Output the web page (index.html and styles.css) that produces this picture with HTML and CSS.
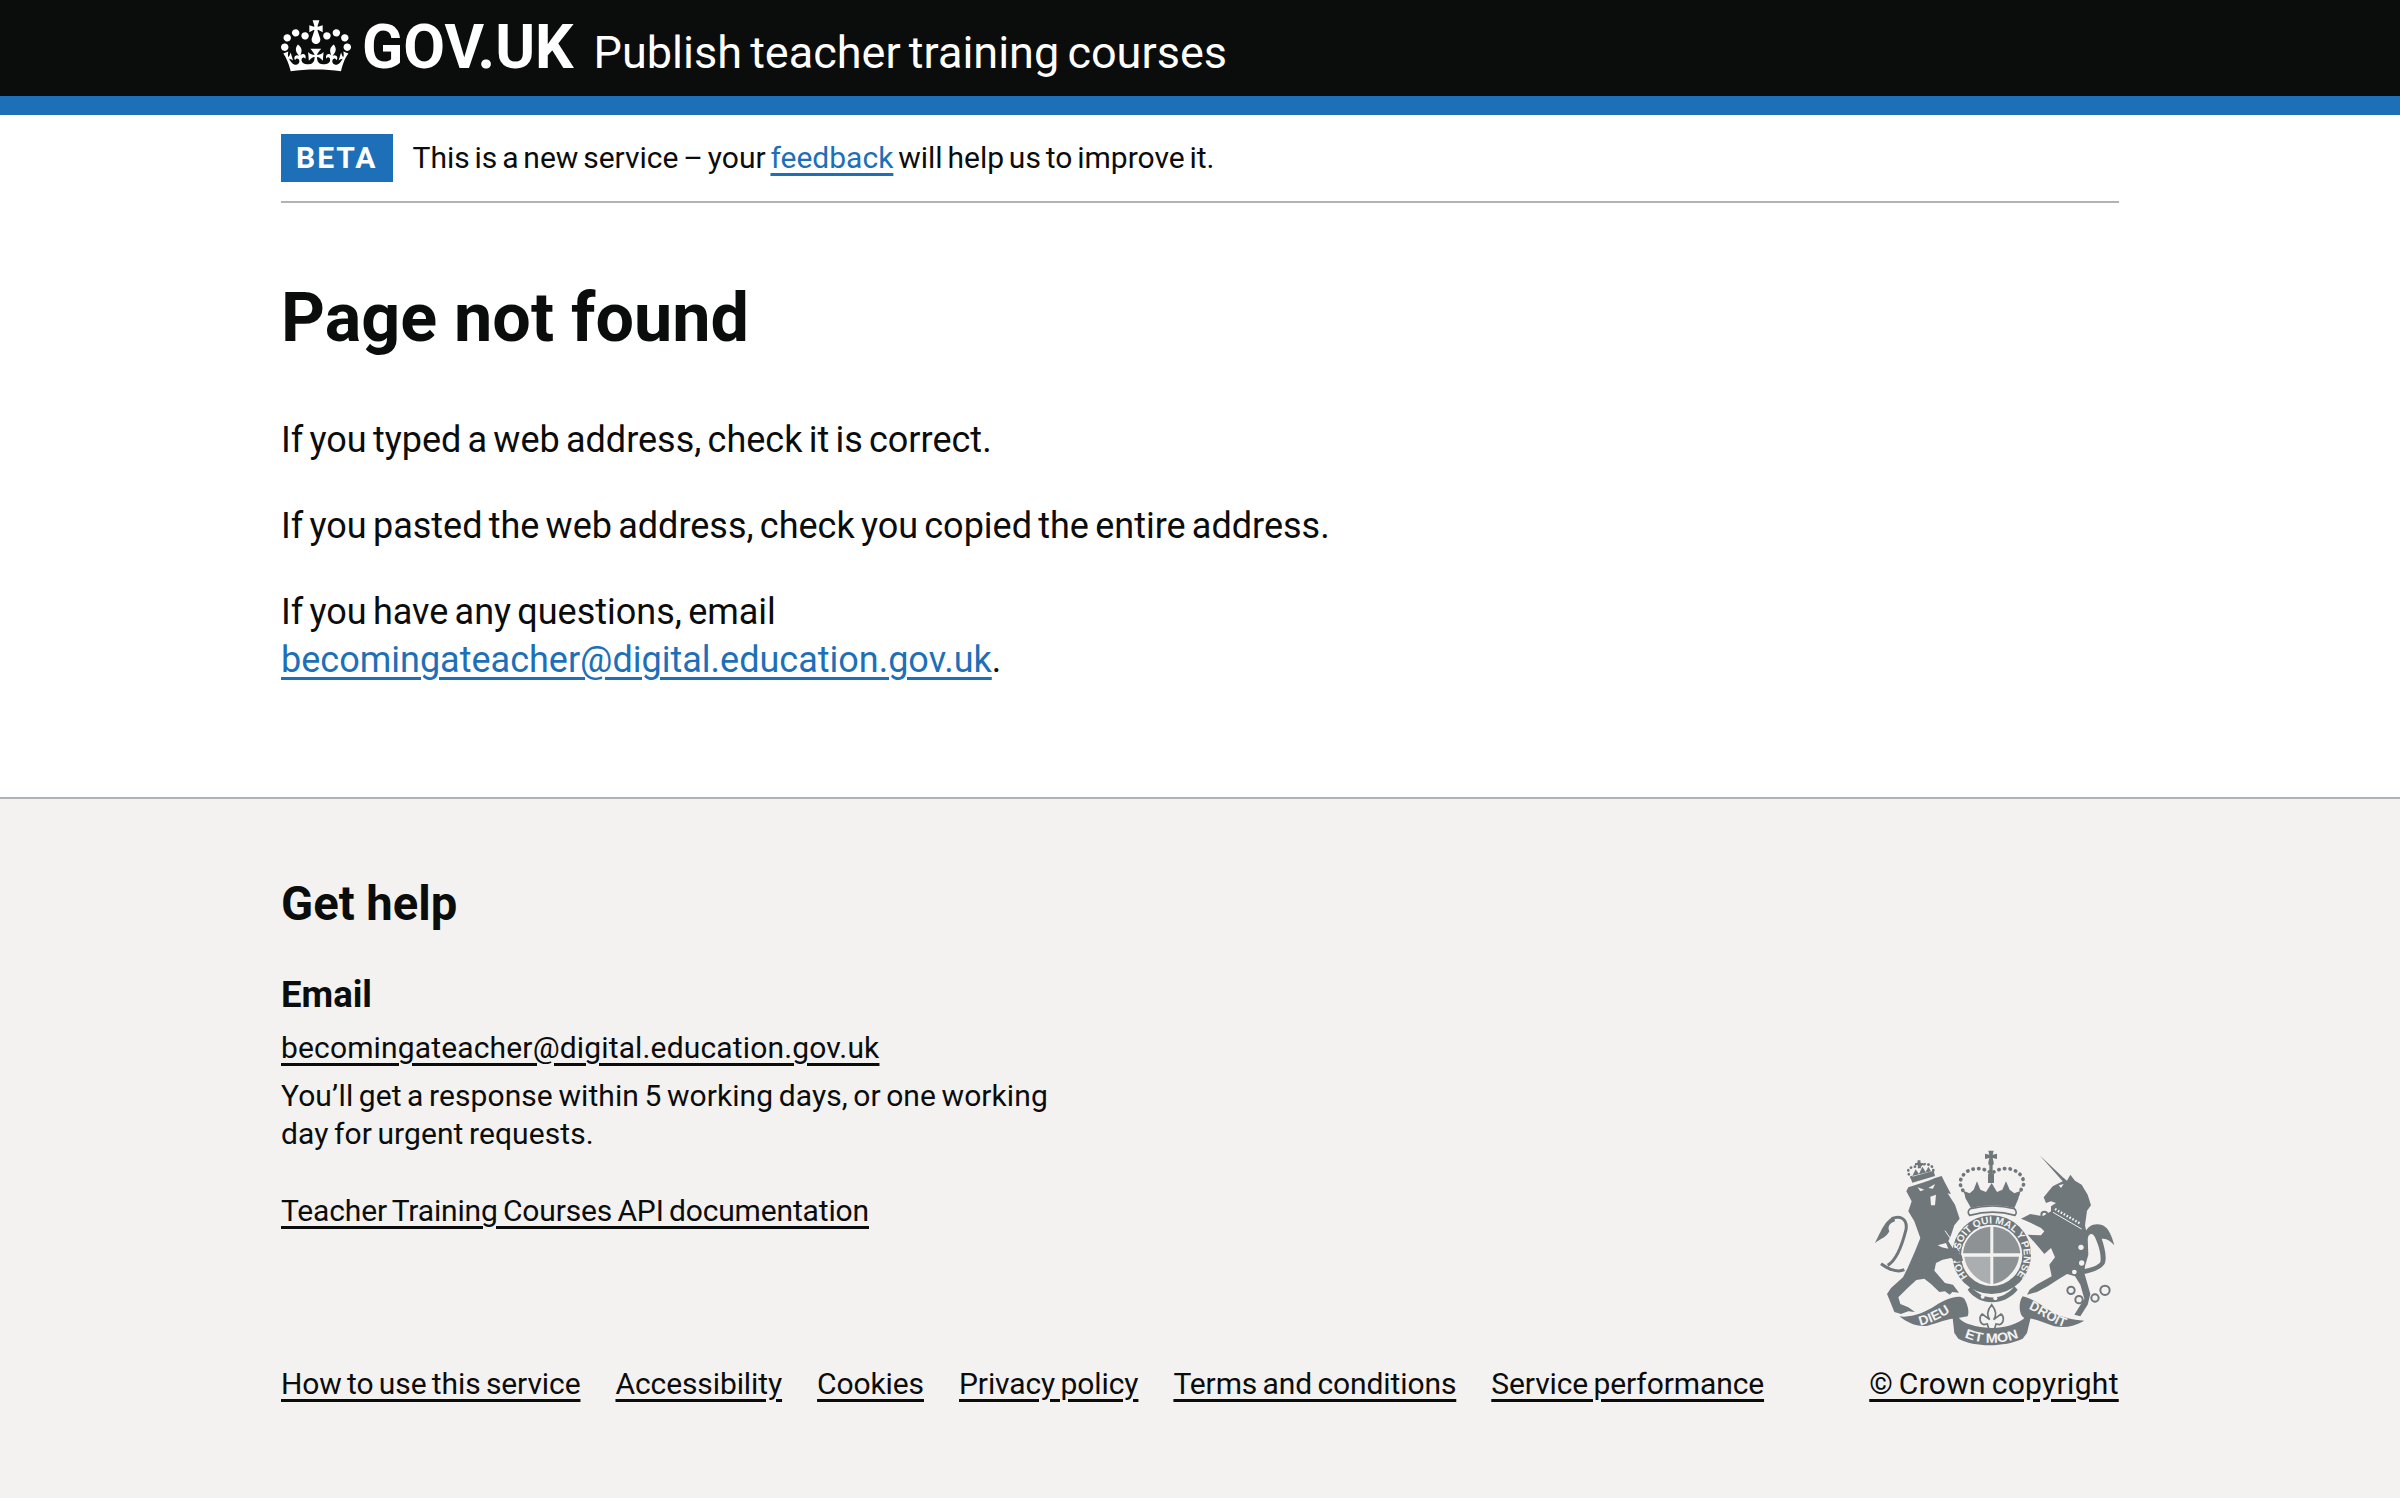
FILE: index.html
```html
<!DOCTYPE html>
<html lang="en">
<head>
    <meta charset="UTF-8">
    <title>Page not found - Publish teacher training courses</title>
    <link rel="stylesheet" href="styles.css">
</head>
<body>
    <header class="header">
        <div class="width-container header-row">
            <a class="logo" href="#">
                <svg class="crown" viewBox="0 0 132 97" fill="#fff"><path d="M25 30.2c3.5 1.5 7.7-.2 9.1-3.7 1.5-3.6-.2-7.8-3.9-9.2-3.6-1.4-7.6.3-9.1 3.9-1.4 3.5.3 7.5 3.9 9zM9 39.5c3.6 1.5 7.8-.2 9.2-3.7 1.5-3.6-.2-7.8-3.9-9.1-3.6-1.5-7.6.2-9.1 3.8-1.4 3.5.3 7.6 3.8 9zM4.4 57.2c3.5 1.5 7.7-.2 9.1-3.8 1.5-3.6-.2-7.7-3.9-9.1-3.6-1.5-7.6.3-9.1 3.8-1.4 3.5.3 7.6 3.9 9.1zm38.3-21.4c3.5 1.5 7.7-.2 9.1-3.8 1.5-3.6-.2-7.7-3.9-9.1-3.6-1.5-7.6.3-9.1 3.8-1.3 3.6.4 7.7 3.9 9.1zm64.4-5.6c-3.6 1.5-7.8-.2-9.1-3.7-1.5-3.6.2-7.8 3.8-9.2 3.6-1.4 7.7.3 9.2 3.9 1.3 3.5-.4 7.5-3.9 9zm15.9 9.3c-3.6 1.5-7.7-.2-9.1-3.7-1.5-3.6.2-7.8 3.7-9.1 3.6-1.5 7.7.2 9.2 3.8 1.5 3.5-.3 7.6-3.8 9zm4.7 17.7c-3.6 1.5-7.8-.2-9.2-3.8-1.5-3.6.2-7.7 3.9-9.1 3.6-1.5 7.7.3 9.2 3.8 1.3 3.5-.4 7.6-3.9 9.1zM89.3 35.8c-3.6 1.5-7.8-.2-9.2-3.8-1.4-3.6.2-7.7 3.9-9.1 3.6-1.5 7.7.3 9.2 3.8 1.4 3.6-.3 7.7-3.9 9.1zM69.7 17.7l8.9 4.7V9.3l-8.9 2.8c-.2-.3-.5-.6-.9-.9L72.4 0H59.6l3.5 11.2c-.3.3-.6.5-.9.9l-8.8-2.8v13.1l8.8-4.7c.3.3.6.7.9.9l-5 15.4v.1c-.2.8-.4 1.6-.4 2.4 0 4.1 3.1 7.5 7 8.1h.2c.3 0 .7.1 1 .1.4 0 .7 0 1-.1h.2c4-.6 7.1-4.1 7.1-8.1 0-.8-.1-1.7-.4-2.4V34l-5.1-15.4c.4-.2.7-.6 1-.9zM66 92.8c16.9 0 32.8 1.1 47.1 3.2 4-16.9 8.9-26.7 14-33.5l-9.6-3.4c1 4.9 1.1 7.2 0 10.2-1.5-1.4-3-4.3-4.2-8.7L108.6 76c2.8-2 5-3.2 7.5-3.3-4.4 9.4-10 11.9-13.6 11.2-4.3-.8-6.3-4.6-5.6-7.9 1-4.7 5.7-5.9 8-.5 4.3-8.7-3-11.4-7.6-8.8 7.1-7.2 7.9-13.5 2.1-21.1-8 6.1-8.1 12.3-4.5 20.8-4.7-5.4-12.1-2.5-9.5 6.2 3.4-5.2 7.9-2 7.2 3.1-.6 4.3-6.4 7.8-13.5 7.2-10.3-.9-10.9-8-11.2-13.8 2.5-.5 7.1 1.8 11 7.3L80.2 60c-4.1 4.4-8 5.3-12.3 5.4 1.4-4.4 8-11.6 8-11.6H55.5s6.4 7.2 7.9 11.6c-4.2-.1-8-1-12.3-5.4l1.4 16.4c3.9-5.5 8.5-7.7 10.9-7.3-.3 5.8-.9 12.8-11.1 13.8-7.2.6-12.9-2.9-13.5-7.2-.7-5 3.8-8.3 7.1-3.1 2.7-8.7-4.6-11.6-9.4-6.2 3.7-8.5 3.6-14.7-4.6-20.8-5.8 7.6-5 13.9 2.2 21.1-4.7-2.6-11.9.1-7.7 8.8 2.3-5.5 7.1-4.2 8.1.5.7 3.3-1.3 7.1-5.7 7.9-3.5.7-9-1.8-13.5-11.2 2.5.1 4.7 1.3 7.5 3.3l-4.7-15.4c-1.2 4.4-2.7 7.2-4.3 8.7-1.1-3-.9-5.3 0-10.2l-9.5 3.4c5 6.9 9.9 16.7 14 33.5 14.8-2.1 30.8-3.2 47.7-3.2z"/></svg>
                <span class="logo-text">GOV.UK</span>
            </a>
            <a class="service-name" href="#">Publish teacher training courses</a>
        </div>
    </header>
    <div class="header-stripe"></div>

    <div class="width-container">
        <div class="phase-banner">
            <strong class="phase-tag">BETA</strong>
            <span>This is a new service – your <a href="#" class="link">feedback</a> will help us to improve it.</span>
        </div>
        <main class="main">
            <h1>Page not found</h1>
            <p>If you typed a web address, check it is correct.</p>
            <p>If you pasted the web address, check you copied the entire address.</p>
            <p>If you have any questions, email<br><a href="#" class="link">becomingateacher@digital.education.gov.uk</a>.</p>
        </main>
    </div>

    <footer class="footer">
        <div class="width-container footer-grid">
            <div class="footer-main">
                <h2>Get help</h2>
                <h3>Email</h3>
                <p class="footer-text email"><a href="#">becomingateacher@digital.education.gov.uk</a></p>
                <p class="footer-text response">You’ll get a response within 5 working days, or one working day for urgent requests.</p>
                <p class="footer-text api"><a href="#">Teacher Training Courses API documentation</a></p>
                <ul class="footer-links">
                    <li><a href="#">How to use this service</a></li>
                    <li><a href="#">Accessibility</a></li>
                    <li><a href="#">Cookies</a></li>
                    <li><a href="#">Privacy policy</a></li>
                    <li><a href="#">Terms and conditions</a></li>
                    <li><a href="#">Service performance</a></li>
                </ul>
            </div>
            <div class="copyright">
                <svg class="crest" viewBox="0 0 741 600">
                    <defs>
                        <path id="ring-top" d="M290 386A96 96 0 1 1 434 386"/>
                        <path id="ribbon-l" d="M148 533C180 525 212 510 240 490"/>
                        <path id="ribbon-m" d="M280 568C335 590 390 590 445 568"/>
                        <path id="ribbon-r" d="M472 483C505 495 540 525 578 537"/>
                    </defs>
                    <!-- garter and shield -->
                    <circle fill="#6f777b" cx="362" cy="320" r="118"/>
                    <path fill="#6f777b" d="M300 415C335 460 395 460 430 415L440 425C400 475 325 475 290 425Z"/>
                    <circle fill="#f3f2f1" cx="362" cy="322" r="92"/>
                    <g fill="#6f777b">
                        <path d="M358 316H276A86 86 0 0 1 358 236Z" opacity=".78"/>
                        <path d="M367 316H448A86 86 0 0 0 367 236Z" opacity=".78"/>
                        <path d="M358 326H280C284 365 320 402 358 408Z" opacity=".55"/>
                        <path d="M367 326H444C440 365 404 402 367 408Z" opacity=".78"/>
                    </g>
                    <g class="crest-text">
                        <text font-size="30" textLength="436" lengthAdjust="spacingAndGlyphs"><textPath href="#ring-top">HONI SOIT QUI MAL Y PENSE</textPath></text>
                    </g>
                    <g fill="#f3f2f1">
                        <circle cx="335" cy="446" r="6"/><circle cx="373" cy="451" r="6"/>
                    </g>
                    <g fill="#6f777b">
                        <!-- lion -->
                        <path d="M112 118C140 108 170 100 192 90L212 84L222 104L240 138L230 136L252 170L266 212L250 232L240 262L232 280L245 300L272 322L276 338L258 342L240 330L215 335L195 345L190 368L222 405L246 410L264 434L244 432L236 440L222 430L205 432L180 408L160 392L136 396L110 420L82 448L88 468L112 478L132 492L112 490L90 498L70 492L58 462L48 438L60 420L96 388L110 360L132 310L148 270L130 220L112 190L122 160L106 130Z"/>
                        <path d="M70 208C45 210 30 250 12 285C28 272 45 270 55 250C48 235 58 225 72 220Z"/>
                        <!-- lion's crown -->
                        <path d="M118 88L188 68L192 84L124 104ZM132 45h7l1-8h8l1 8h7v7h-7l1 9h-10l1-9h-9z"/>
                        <path d="M124 84L134 64L144 78L154 56L164 72L172 56L180 70Z"/>
                        <!-- unicorn -->
                        <path d="M506 22L574 86L588 98L598 80L612 98L632 110L650 140L660 172L648 188L642 232L650 270L652 320L642 355L640 375L658 438L650 470L628 505L610 500L640 452L628 410L612 385L588 378L560 395L530 415L498 432L468 440L476 425L500 408L542 385L535 350L552 328L540 300L520 318L505 300L470 260L510 262L520 250L510 240L480 225L465 218L450 212L478 198L515 205L540 190L540 175L555 165L540 160L525 165L518 148L545 115L575 100Z"/>
                        <path d="M640 270C640 235 670 222 695 232C712 240 722 262 730 292C715 275 705 272 692 272C700 295 708 325 702 345C692 365 665 372 640 378L636 364C660 360 682 352 688 342C692 320 682 290 672 268C665 252 652 256 650 272Z"/>
                        <!-- crown -->
                        <path d="M352 8h16l-3 12 13-3v16l-13-3 3 12h-16l3-12-13 3V17l13 3zM352 42h16v8h-3v28h4v27h-18V78h4V50h-3z"/>
                        <path d="M283 150C282 140 280 135 276 128L296 136L308 125L318 100L328 125L345 132L362 105L378 132L394 125L405 100L416 125L430 136L450 128C446 135 444 142 442 152L430 180C390 170 340 170 300 180Z"/>
                        <!-- mottos -->
                        <path d="M85 505C120 510 160 495 195 472C225 452 265 438 280 452C290 470 296 490 290 505L262 510C230 512 200 525 170 533C140 538 110 525 85 505Z"/>
                        <path d="M245 510L262 508C280 535 345 540 365 540C395 540 445 530 465 505L480 505L468 555L455 572C400 598 310 598 262 572L250 555Z"/>
                        <path d="M455 445C480 450 510 470 540 490C570 510 605 515 640 518C610 535 585 540 550 535C520 525 490 510 460 510C445 505 440 465 455 445Z"/>
                    </g>
                    <g fill="none" stroke="#6f777b">
                        <path d="M100 365C80 375 55 365 30 347M50 352C80 335 95 285 105 245C110 215 90 200 62 212" stroke-width="9"/>
                        <path d="M298 182C340 172 390 172 430 182C438 190 436 198 432 202C390 190 340 190 296 202C290 196 290 188 298 182Z" fill="#f3f2f1" stroke-width="5"/>
                        <path d="M362 470C378 490 375 505 368 515L390 498C400 505 400 525 385 530L375 528L370 545H354L349 528L339 530C324 525 324 505 334 498L356 515C349 505 346 490 362 470Z" stroke-width="5"/>
                        <g stroke-width="6">
                            <circle cx="600" cy="427" r="11"/><circle cx="624" cy="455" r="11"/><circle cx="672" cy="450" r="11"/><circle cx="702" cy="427" r="14"/>
                            <circle cx="520" cy="200" r="9"/><circle cx="508" cy="278" r="9"/>
                        </g>
                        <path d="M356 72C320 50 275 65 268 100C266 115 275 125 283 140M368 72C405 50 450 65 458 100C460 115 450 125 440 140" stroke-width="11" stroke-dasharray="1 16" stroke-linecap="round"/>
                        <path d="M122 88C105 75 108 58 132 56M148 52C170 42 192 55 186 72" stroke-width="8" stroke-dasharray="1 11" stroke-linecap="round"/>
                    </g>
                    <g fill="#f3f2f1">
                        <path d="M140 118L160 125L148 130ZM192 108L172 120L186 122ZM178 146L195 140L192 172L180 172Z"/>
                        <circle cx="632" cy="345" r="8"/><circle cx="630" cy="298" r="8"/><circle cx="610" cy="372" r="7"/>
                        <path d="M563 112L578 108L570 120Z"/>
                        <path d="M200 292L225 285L232 302L212 298Z"/>
                    </g>
                    <g fill="none" stroke="#f3f2f1">
                        <path d="M222 248L265 310" stroke-width="3"/>
                        <path d="M552 183L630 228" stroke-width="7" stroke-dasharray="5 5"/>
                        <path d="M546 193L632 243" stroke-width="3"/>
                    </g>
                    <g class="crest-text">
                        <text font-size="40" textLength="100" lengthAdjust="spacingAndGlyphs"><textPath href="#ribbon-l">DIEU</textPath></text>
                        <text font-size="40" textLength="168" lengthAdjust="spacingAndGlyphs"><textPath href="#ribbon-m">ET MON</textPath></text>
                        <text font-size="40" textLength="122" lengthAdjust="spacingAndGlyphs"><textPath href="#ribbon-r">DROIT</textPath></text>
                    </g>
                </svg>
                <a href="#">© Crown copyright</a>
            </div>
        </div>
    </footer>
</body>
</html>
```

FILE: styles.css
```css
body {
    font-family: Roboto, Arial, sans-serif;
    margin: 0;
    padding: 0;
    background-color: #fff;
    color: #0b0c0c;
}

a {
    color: inherit;
    text-decoration-thickness: 3px;
    text-underline-offset: .15em;
}

.width-container {
    width: 1838px;
    margin: 0 auto;
}

.header {
    background-color: #0b0c0c;
    height: 96px;
    color: #fff;
}

.header-row {
    display: flex;
    align-items: flex-start;
}

.logo {
    display: flex;
    align-items: flex-start;
    color: #fff;
    text-decoration: none;
    margin-right: 20px;
}

.crown {
    width: 70px;
    height: 52px;
    margin: 20px 11px 0 0;
}

.logo-text {
    font-size: 60.6px;
    line-height: 96px;
    font-weight: 700;
}

.service-name {
    font-size: 45px;
    word-spacing: -3px;
    line-height: 106px;
    color: #fff;
    text-decoration: none;
}

.header-stripe {
    height: 19px;
    background-color: #1d70b8;
}

.phase-banner {
    display: flex;
    align-items: center;
    gap: 20px;
    height: 48px;
    padding: 19px 0;
    border-bottom: 2px solid #b1b4b6;
    font-size: 30px;
    line-height: 48px;
    word-spacing: -2.6px;
}

.phase-tag {
    background-color: #1d70b8;
    color: #fff;
    font-size: 30px;
    letter-spacing: 2px;
    padding: 0 15px;
    line-height: 48px;
}

.link {
    color: #1d70b8;
}

.main {
    padding-top: 67px;
    height: 527px;
    font-size: 36px;
    line-height: 48px;
    word-spacing: -2.7px;
}

h1 {
    font-size: 68.3px;
    line-height: 96px;
    font-weight: 700;
    margin: 0 0 50px;
    word-spacing: 0;
}

.main p {
    margin: 0 0 38px;
}

.footer {
    background-color: #f3f2f1;
    border-top: 2px solid #b1b4b6;
    height: 701px;
    padding-top: 77px;
    box-sizing: border-box;
    font-size: 30px;
    line-height: 38px;
    word-spacing: -2px;
}

.footer-grid {
    display: grid;
    grid-template-columns: 1fr auto;
    align-items: end;
}

.footer h2 {
    font-size: 47.2px;
    line-height: 57px;
    font-weight: 700;
    margin: 0 0 38px;
    word-spacing: 0;
}

.footer h3 {
    font-size: 36.5px;
    line-height: 48px;
    font-weight: 700;
    margin: 0 0 10px;
}

.footer-text {
    margin: 0 0 10px;
}

.email {
    letter-spacing: .15px;
}

.response {
    width: 800px;
    letter-spacing: .08px;
}

.api {
    margin-top: 39px;
    letter-spacing: -.15px;
}

.footer-links {
    display: flex;
    gap: 35px;
    list-style: none;
    margin: 135px 0 0;
    padding: 0;
    letter-spacing: -.1px;
}

.copyright {
    display: flex;
    flex-direction: column;
    align-items: center;
    width: 250px;
    letter-spacing: .3px;
    white-space: nowrap;
}

.crest {
    width: 247px;
    height: 200px;
    margin-bottom: 17px;
}

.crest-text {
    fill: #f3f2f1;
    font-family: "Liberation Sans", Arial, sans-serif;
    font-weight: 700;
}
```
